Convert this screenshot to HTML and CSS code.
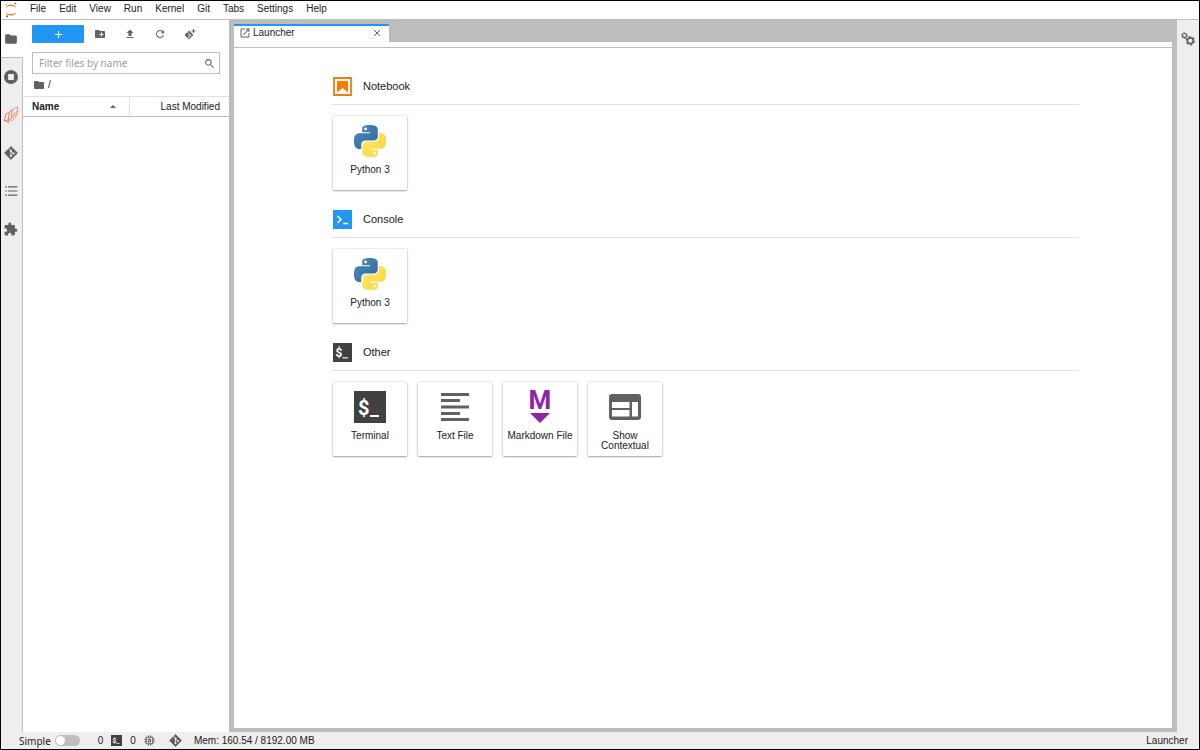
FILE: index.html
```
<!DOCTYPE html>
<html lang="en">
<head>
    <meta charset="UTF-8">
    <meta name="viewport" content="width=device-width, initial-scale=1.0">
    <title>JupyterLab</title>
    <link rel="stylesheet" href="styles.css">
</head>
<body>
    <!-- Shared icons -->
    <svg class="sprite" aria-hidden="true">
        <linearGradient id="pyBlue" x1="0" y1="0" x2="1" y2="1">
            <stop offset="0" stop-color="#4b8bbe"/>
            <stop offset="1" stop-color="#306998"/>
        </linearGradient>
        <linearGradient id="pyYellow" x1="0" y1="0" x2="1" y2="1">
            <stop offset="0" stop-color="#ffe873"/>
            <stop offset="1" stop-color="#ffd43b"/>
        </linearGradient>
        <symbol id="folder" viewBox="0 0 24 24">
            <path d="M10 4H4c-1.1 0-1.99.9-1.99 2L2 18c0 1.1.9 2 2 2h16c1.1 0 2-.9 2-2V8c0-1.1-.9-2-2-2h-8l-2-2z"/>
        </symbol>
        <symbol id="git" viewBox="0 0 24 24">
            <path d="M12 1 23 12 12 23 1 12z" stroke="currentColor" stroke-width="1.5" stroke-linejoin="round"/>
            <path d="M8 4l4 4v9M12 9l4 4" fill="none" stroke="#eee" stroke-width="1.6"/>
            <circle cx="12" cy="8.500" r="1.900" fill="#eee"/>
            <circle cx="12" cy="17" r="1.900" fill="#eee"/>
            <circle cx="16.500" cy="13" r="1.900" fill="#eee"/>
        </symbol>
        <symbol id="python" viewBox="0 0 24 24">
            <path fill="url(#pyBlue)" d="M14.25.18l.9.2.73.26.59.3.45.32.34.34.25.34.16.33.1.3.04.26.02.2-.01.13V8.5l-.05.63-.13.55-.21.46-.26.38-.3.31-.33.25-.35.19-.35.14-.33.1-.3.07-.26.04-.21.02H8.77l-.69.05-.59.14-.5.22-.41.27-.33.32-.27.35-.2.36-.15.37-.1.35-.07.32-.04.27-.02.21v3.06H3.17l-.21-.03-.28-.07-.32-.12-.35-.18-.36-.26-.36-.36-.35-.46-.32-.59-.28-.73-.21-.88-.14-1.05-.05-1.23.06-1.22.16-1.04.24-.87.32-.71.36-.57.4-.44.42-.33.42-.24.4-.16.36-.1.32-.05.24-.01h.16l.06.01h8.16v-.83H6.18l-.01-2.75-.02-.37.05-.34.11-.31.17-.28.25-.26.31-.23.38-.2.44-.18.51-.15.58-.12.64-.1.71-.06.77-.04.84-.02 1.27.05zm-6.3 1.98l-.23.33-.08.41.08.41.23.34.33.22.41.09.41-.09.33-.22.23-.34.08-.41-.08-.41-.23-.33-.33-.22-.41-.09-.41.09z"/>
            <path fill="url(#pyYellow)" d="M21.1 6.11l.28.06.32.12.35.18.36.27.36.35.35.47.32.59.28.73.21.88.14 1.04.05 1.23-.06 1.23-.16 1.04-.24.86-.32.71-.36.57-.4.45-.42.33-.42.24-.4.16-.36.09-.32.05-.24.02-.16-.01h-8.22v.82h5.84l.01 2.76.02.36-.05.34-.11.31-.17.29-.25.25-.31.24-.38.2-.44.17-.51.15-.58.13-.64.09-.71.07-.77.04-.84.01-1.27-.04-1.07-.14-.9-.2-.73-.25-.59-.3-.45-.33-.34-.34-.25-.34-.16-.33-.1-.3-.04-.25-.02-.2.01-.13v-5.34l.05-.64.13-.54.21-.46.26-.38.3-.32.33-.24.35-.2.35-.14.33-.1.3-.06.26-.04.21-.02.13-.01h5.84l.69-.05.59-.14.5-.21.41-.28.33-.32.27-.35.2-.36.15-.36.1-.35.07-.32.04-.28.02-.21V6.07h2.09l.14.01zm-6.47 14.25l-.23.33-.08.41.08.41.23.33.33.23.41.08.41-.08.33-.23.23-.33.08-.41-.08-.41-.23-.33-.33-.23-.41-.08-.41.08z"/>
        </symbol>
    </svg>

    <!-- Menu bar -->
    <header class="menubar">
        <svg class="logo" viewBox="0 0 16 18">
            <path d="M2 6.500C3 3.800 5.300 2.800 8 2.800s5 1 6 3.700C12.500 5 10.500 4.500 8 4.500S3.500 5 2 6.500z" fill="#f37726"/>
            <path d="M2 11.500c1 2.700 3.300 3.700 6 3.700s5-1 6-3.700c-1.500 1.500-3.500 2-6 2s-4.500-.500-6-2z" fill="#f37726"/>
            <circle cx="13" cy="1.600" r="1.100" fill="#767677"/>
            <circle cx="2.500" cy="3" r=".7" fill="#767677"/>
            <circle cx="3.500" cy="16" r="1.200" fill="#616262"/>
        </svg>
        <nav class="menus">
            <button>File</button>
            <button>Edit</button>
            <button>View</button>
            <button>Run</button>
            <button>Kernel</button>
            <button>Git</button>
            <button>Tabs</button>
            <button>Settings</button>
            <button>Help</button>
        </nav>
    </header>

    <div class="workspace">
        <!-- Left activity bar -->
        <aside class="activity-bar">
            <button class="active" aria-label="File Browser"><svg class="icon-m"><use href="#folder"/></svg></button>
            <button aria-label="Running Terminals and Kernels">
                <svg class="icon-m" viewBox="0 0 24 24">
                    <circle cx="12" cy="12" r="12"/>
                    <rect x="7" y="7" width="10" height="10" rx="1" fill="#eee"/>
                </svg>
            </button>
            <button aria-label="Dask">
                <svg class="icon-l" viewBox="0 0 28 32" fill="none" stroke-width="1.700" stroke-linejoin="round">
                    <path d="M5 14 11 12 9 25 2 26zM11 12c1-2.500 3-4.500 5-5.500L15 20c-1 3-3 5-6 5" stroke="#e2795b"/>
                    <path d="M16 9c1-3 5-6 10-7 0 9-2 20-12 25M17 16c3-2 6-4 8-7M16 21c3-2 6-4 8-7" stroke="#ef8f68"/>
                    <path d="M2 26c3 1 5 2 7 4l3-6" stroke="#e2795b"/>
                </svg>
            </button>
            <button aria-label="Git"><svg class="icon-m"><use href="#git"/></svg></button>
            <button aria-label="Table of Contents">
                <svg class="icon-m" viewBox="0 0 24 24">
                    <path d="M7 4h16v2H7zM7 11h16v2H7zM7 18h16v2H7zM2 4h3v2H2zM2 11h3v2H2zM2 18h3v2H2z"/>
                </svg>
            </button>
            <button aria-label="Extension Manager">
                <svg class="icon-m" viewBox="1 0 23 23">
                    <path d="M20.500 11H19V7c0-1.100-.9-2-2-2h-4V3.500C13 2.120 11.880 1 10.500 1S8 2.120 8 3.500V5H4c-1.100 0-1.990.9-1.990 2v3.800H3.500c1.490 0 2.700 1.210 2.700 2.700s-1.210 2.700-2.700 2.700H2V20c0 1.100.9 2 2 2h3.800v-1.500c0-1.490 1.210-2.700 2.700-2.700 1.490 0 2.700 1.210 2.700 2.700V22H17c1.100 0 2-.9 2-2v-4h1.500c1.380 0 2.500-1.120 2.500-2.500S21.880 11 20.500 11z"/>
                </svg>
            </button>
        </aside>

        <!-- File browser -->
        <section class="file-browser">
            <div class="toolbar">
                <button class="new-launcher" aria-label="New Launcher">
                    <svg viewBox="0 0 8 8"><path d="M4 0v8M0 4h8" stroke="#fff" stroke-width="1.200"/></svg>
                </button>
                <button aria-label="New Folder">
                    <svg viewBox="0 0 24 24"><path d="M20 6h-8l-2-2H4c-1.110 0-1.990.89-1.990 2L2 18c0 1.110.89 2 2 2h16c1.110 0 2-.89 2-2V8c0-1.110-.89-2-2-2zm-1 8h-3v3h-2v-3h-3v-2h3V9h2v3h3v2z"/></svg>
                </button>
                <button aria-label="Upload Files">
                    <svg viewBox="0 0 24 24"><path d="M5 20h14v-2H5v2zm0-10h4v6h6v-6h4l-7-7-7 7z"/></svg>
                </button>
                <button aria-label="Refresh File List">
                    <svg viewBox="0 0 18 18"><path d="M9 13.500c-2.490 0-4.500-2.010-4.500-4.500S6.510 4.500 9 4.500c1.240 0 2.360.52 3.170 1.330L10 8h5V3l-1.760 1.760C12.150 3.680 10.660 3 9 3 5.690 3 3.010 5.690 3.010 9S5.690 15 9 15c2.970 0 5.430-2.160 5.900-5h-1.520c-.46 2-2.240 3.500-4.380 3.500z"/></svg>
                </button>
                <button aria-label="Git Clone">
                    <svg viewBox="0 0 24 24">
                        <path d="M10 5 19 14 10 23 1 14z"/>
                        <path d="M7 8l3 3v8M10 12l3 3" stroke="#fff" stroke-width="1.300" fill="none"/>
                        <circle cx="10" cy="19" r="1.500" fill="#fff"/>
                        <circle cx="13.500" cy="15" r="1.500" fill="#fff"/>
                        <path d="M19 2v8M15 6h8" stroke="currentColor" stroke-width="2"/>
                    </svg>
                </button>
            </div>
            <div class="filter">
                <input type="text" placeholder="Filter files by name" aria-label="Filter files by name">
                <svg viewBox="0 0 18 18"><path d="M12.100 10.900h-.7l-.2-.2c.8-.9 1.300-2.200 1.300-3.500 0-3-2.400-5.400-5.400-5.400S1.800 4.200 1.800 7.100s2.400 5.400 5.400 5.400c1.300 0 2.500-.5 3.500-1.300l.2.2v.7l4.100 4.100 1.200-1.200-4.100-4.100zm-5 0c-2.100 0-3.700-1.700-3.700-3.700s1.700-3.700 3.700-3.700 3.700 1.700 3.700 3.700-1.600 3.700-3.700 3.700z"/></svg>
            </div>
            <div class="crumbs"><svg><use href="#folder"/></svg><span>/</span></div>
            <div class="listing-header">
                <button class="col-name">Name <svg viewBox="0 0 6 3"><path d="M0 3 3 0l3 3z"/></svg></button>
                <button class="col-modified">Last Modified</button>
            </div>
        </section>

        <!-- Main dock area -->
        <main class="dock">
            <div class="tabs">
                <div class="tab">
                    <svg viewBox="2 2 20 20"><path d="M19 19H5V5h7V3H5a2 2 0 0 0-2 2v14a2 2 0 0 0 2 2h14c1.100 0 2-.9 2-2v-7h-2v7zM14 3v2h3.590l-9.830 9.830 1.410 1.410L19 6.410V10h2V3h-7z"/></svg>
                    <span>Launcher</span>
                    <button aria-label="Close"><svg viewBox="0 0 8 8"><path d="M1 1l6 6M7 1 1 7" stroke="currentColor"/></svg></button>
                </div>
            </div>
            <div class="launcher">
                <section>
                    <h2>
                        <svg viewBox="0 0 19 19">
                            <path d="M1 1h17v17H1z" fill="#fff" stroke="#ef7b12" stroke-width="1.800"/>
                            <path d="M4 4h11v11.500L9.500 11 4 15.500z" fill="#f57c00"/>
                        </svg>
                        Notebook
                    </h2>
                    <div class="cards">
                        <button class="card"><svg><use href="#python"/></svg><span>Python 3</span></button>
                    </div>
                </section>
                <section>
                    <h2>
                        <svg viewBox="0 0 19 19">
                            <path d="M0 0h19v19H0z" fill="#2196f3"/>
                            <path d="M4.500 6 8 9.500 4.500 13M10 13.500h5" fill="none" stroke="#fff" stroke-width="1.600"/>
                        </svg>
                        Console
                    </h2>
                    <div class="cards">
                        <button class="card"><svg><use href="#python"/></svg><span>Python 3</span></button>
                    </div>
                </section>
                <section>
                    <h2>
                        <svg viewBox="0 0 32 32">
                            <path d="M0 0h32v32H0z" fill="#414141"/>
                            <text x="4" y="24" class="glyph-dollar">$</text>
                            <path d="M16 24h9v2h-9z" fill="#fff"/>
                        </svg>
                        Other
                    </h2>
                    <div class="cards">
                        <button class="card">
                            <svg viewBox="0 0 32 32">
                                <path d="M0 0h32v32H0z" fill="#414141"/>
                                <text x="4" y="24" class="glyph-dollar">$</text>
                                <path d="M16 24h9v2h-9z" fill="#fff"/>
                            </svg>
                            <span>Terminal</span>
                        </button>
                        <button class="card">
                            <svg viewBox="0 0 32 32"><path d="M2 2h28v3H2zM2 8h19v3H2zM2 14.500h28v3H2zM2 21h19v3H2zM2 27h28v3H2z"/></svg>
                            <span>Text File</span>
                        </button>
                        <button class="card">
                            <svg class="markdown" viewBox="0 0 32 32">
                                <text x="16" y="18" class="glyph-m">M</text>
                                <path d="M6 22h20l-10 10z"/>
                            </svg>
                            <span>Markdown File</span>
                        </button>
                        <button class="card">
                            <svg viewBox="0 0 32 32">
                                <rect x="0" y="3" width="32" height="26" rx="3"/>
                                <path d="M3 11h17.500v6H3zM3 19h17.500v6.500H3zM23 11h6v14.500h-6z" fill="#fff"/>
                            </svg>
                            <span>Show Contextual</span>
                        </button>
                    </div>
                </section>
            </div>
        </main>

        <!-- Right sidebar -->
        <aside class="right-bar">
            <button aria-label="Property Inspector">
                <svg viewBox="0 0 24 24" fill="none" stroke="currentColor">
                    <circle cx="6" cy="6" r="3.500" stroke-width="2"/>
                    <circle cx="6" cy="6" r="5" stroke-width="1.500" stroke-dasharray="2.600"/>
                    <circle cx="16" cy="15" r="5" stroke-width="2.800"/>
                    <circle cx="16" cy="15" r="7" stroke-width="2" stroke-dasharray="3.660"/>
                </svg>
            </button>
        </aside>
    </div>

    <!-- Status bar -->
    <footer class="statusbar">
        <label class="simple" for="simpleMode">Simple <input type="checkbox" id="simpleMode" role="switch"></label>
        <span class="sessions">0
            <svg viewBox="0 0 32 32">
                <path d="M0 0h32v32H0z" fill="#414141"/>
                <text x="4" y="24" class="glyph-dollar">$</text>
                <path d="M16 24h9v2h-9z" fill="#fff"/>
            </svg>
            0
            <svg viewBox="2 2 20 20"><path d="M15 9H9v6h6V9zm-2 4h-2v-2h2v2zm8-2V9h-2V7c0-1.100-.9-2-2-2h-2V3h-2v2h-2V3H9v2H7c-1.100 0-2 .9-2 2v2H3v2h2v2H3v2h2v2c0 1.100.9 2 2 2h2v2h2v-2h2v2h2v-2h2c1.100 0 2-.9 2-2v-2h2v-2h-2v-2h2zm-4 6H7V7h10v10z"/></svg>
        </span>
        <svg class="status-git"><use href="#git"/></svg>
        <span>Mem: 160.54 / 8192.00 MB</span>
        <span class="current">Launcher</span>
    </footer>
</body>
</html>
```
FILE: styles.css
```
* {
    margin: 0;
    padding: 0;
    box-sizing: border-box;
}

body {
    height: 100vh;
    display: flex;
    flex-direction: column;
    border: 1px solid #000;
    font-family: "Liberation Sans", Arial, sans-serif;
    font-size: 10px;
    line-height: 12px;
    color: #212121;
    fill: #616161;
    background: #fff;
    overflow: hidden;
}

button {
    font: inherit;
    color: inherit;
    background: none;
    border: none;
    cursor: pointer;
}

svg {
    display: block;
    flex: none;
    color: #616161;
}

.sprite {
    position: absolute;
    width: 0;
    height: 0;
}

/* Menu bar */
.menubar {
    display: flex;
    align-items: center;
    height: 19px;
    border-bottom: 1px solid #bdbdbd;
}

.logo {
    width: 16px;
    height: 16px;
    margin: 0 5px 0 2px;
}

.menus {
    display: flex;
}

.menus button {
    height: 18px;
    padding: 0 7px 2px 6px;
}

/* Workspace */
.workspace {
    flex: 1;
    display: flex;
    min-height: 0;
}

.activity-bar {
    width: 22px;
    display: flex;
    flex-direction: column;
    background: #eee;
}

.activity-bar button {
    height: 38px;
    display: flex;
    align-items: center;
    justify-content: center;
    padding-right: 2px;
    border-right: 1px solid #bdbdbd;
}

.activity-bar::after {
    content: "";
    flex: 1;
    border-right: 1px solid #bdbdbd;
}

.activity-bar .active {
    background: #fff;
    border-right-color: #fff;
    border-bottom: 1px solid #bdbdbd;
}

.icon-m {
    width: 14px;
    height: 14px;
}

.icon-l {
    width: 16px;
    height: 18px;
}

/* File browser */
.file-browser {
    width: 206px;
    background: #fff;
}

.toolbar {
    display: flex;
    align-items: center;
    padding: 5px 9px 0;
}

.toolbar button {
    width: 30px;
    height: 18px;
    display: flex;
    align-items: center;
    justify-content: center;
}

.toolbar svg {
    width: 12px;
    height: 12px;
}

.toolbar .new-launcher {
    width: 52px;
    margin-right: 1px;
    border-radius: 1px;
    background: #2196f3;
}

.toolbar .new-launcher svg {
    width: 7px;
    height: 7px;
}

.filter {
    display: flex;
    align-items: center;
    height: 22px;
    margin: 9px 9px 0;
    padding: 0 4px 0 6px;
    border: 1px solid #bdbdbd;
}

.filter input {
    flex: 1;
    min-width: 0;
    border: none;
    outline: none;
    font-family: "Noto Sans", sans-serif;
    font-size: 10px;
}

.filter input::placeholder {
    color: #9e9e9e;
}

.filter svg {
    width: 11px;
    height: 11px;
}

.crumbs {
    display: flex;
    align-items: center;
    gap: 3px;
    height: 22px;
    padding-left: 10px;
}

.crumbs svg {
    width: 12px;
    height: 12px;
}

.listing-header {
    display: flex;
    height: 21px;
    border-top: 1px solid #e0e0e0;
    border-bottom: 1px solid #bdbdbd;
}

.listing-header button {
    display: flex;
    align-items: center;
}

.listing-header .col-name {
    width: 107px;
    justify-content: space-between;
    padding: 0 13px 0 9px;
    border-right: 1px solid #e0e0e0;
    font-weight: bold;
}

.col-name svg {
    width: 6px;
    height: 3px;
}

.listing-header .col-modified {
    flex: 1;
    justify-content: flex-end;
    padding-right: 9px;
}

/* Dock panel */
.dock {
    flex: 1;
    display: flex;
    flex-direction: column;
    padding: 4px 5px 4px;
    background: #bdbdbd;
}

.tabs {
    display: flex;
    border-bottom: 5px solid #fff;
}

.tab {
    width: 155px;
    height: 18px;
    display: flex;
    align-items: center;
    padding: 0 8px 2px 6px;
    border-top: 2px solid #2196f3;
    background: #fff;
}

.tab svg {
    width: 10px;
    height: 10px;
    margin-right: 3px;
}

.tab button {
    margin-left: auto;
}

.tab button svg {
    width: 8px;
    height: 8px;
    margin: 0;
}

.launcher {
    flex: 1;
    padding: 26px 93px 0 98px;
    border-top: 1px solid #bdbdbd;
    background: #fff;
    overflow: auto;
}

.launcher section {
    margin-bottom: 17px;
}

.launcher h2 {
    display: flex;
    align-items: center;
    gap: 11px;
    height: 31px;
    padding: 0 0 6px 1px;
    border-bottom: 1px solid #e0e0e0;
    font-size: 11px;
    font-weight: normal;
}

.launcher h2 svg {
    width: 19px;
    height: 19px;
}

.cards {
    display: flex;
    flex-wrap: wrap;
    gap: 11px;
    padding: 11px 1px 0;
}

.card {
    width: 74px;
    height: 74px;
    display: flex;
    flex-direction: column;
    align-items: center;
    padding-top: 9px;
    background: #fff;
    border-radius: 1px;
    box-shadow: 0 0 2px rgba(0, 0, 0, 0.24), 0 1px 2px rgba(0, 0, 0, 0.32);
    line-height: 10px;
}

.card svg {
    width: 32px;
    height: 32px;
    margin-bottom: 8px;
}

.card .markdown {
    fill: #8e24aa;
    overflow: visible;
}

.glyph-dollar {
    font: bold 20px Roboto, sans-serif;
    fill: #fff;
}

.glyph-m {
    font: bold 26px Roboto, sans-serif;
    text-anchor: middle;
}

/* Right sidebar */
.right-bar {
    width: 22px;
    background: #eee;
}

.right-bar button {
    display: flex;
    width: 22px;
    height: 38px;
    align-items: center;
    justify-content: center;
}

.right-bar svg {
    width: 14px;
    height: 14px;
}

/* Status bar */
.statusbar {
    display: flex;
    align-items: center;
    height: 17px;
    padding: 0 11px 0 18px;
    background: #eee;
}

.simple {
    display: flex;
    align-items: center;
    gap: 4px;
    font-family: "Noto Sans", sans-serif;
}

.simple input {
    appearance: none;
    width: 25px;
    height: 11px;
    padding: 1px;
    border-radius: 6px;
    background: #bdbdbd;
}

.simple input::before {
    content: "";
    display: block;
    width: 9px;
    height: 9px;
    border-radius: 50%;
    background: #fff;
}

.sessions {
    display: flex;
    align-items: center;
    gap: 8px;
    margin-left: 18px;
}

.sessions svg {
    width: 11px;
    height: 11px;
}

.status-git {
    width: 13px;
    height: 13px;
    margin: 0 12px 0 14px;
}

.current {
    margin-left: auto;
}
```
